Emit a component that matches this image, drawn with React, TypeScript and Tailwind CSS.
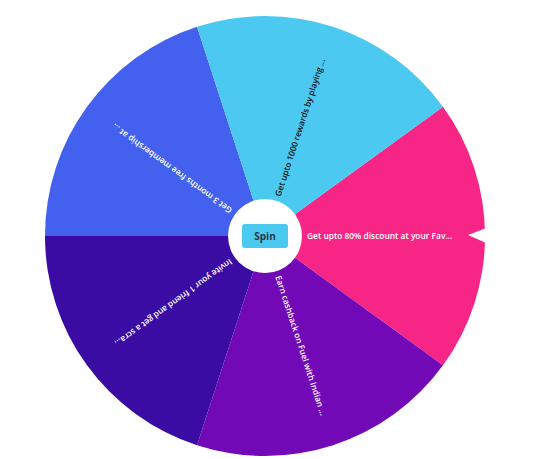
const SLICES = [
  { angle: 0, color: "#f72585", text: "Get upto 80% discount at your Fav...", fg: "#ffffff" },
  { angle: 72, color: "#7209b7", text: "Earn cashback on Fuel with Indian ...", fg: "#ffffff" },
  { angle: 144, color: "#3a0ca3", text: "Invite your 1 friend and get a scra...", fg: "#ffffff" },
  { angle: 216, color: "#4361ee", text: "Get 3 months free membership at ...", fg: "#ffffff" },
  { angle: 288, color: "#4cc9f0", text: "Get upto 1000 rewards by playing ...", fg: "#111111" },
];

const R = 220;
const C = 220;

function slicePath(center: number) {
  const a0 = ((center - 36) * Math.PI) / 180;
  const a1 = ((center + 36) * Math.PI) / 180;
  const x0 = C + R * Math.cos(a0);
  const y0 = C + R * Math.sin(a0);
  const x1 = C + R * Math.cos(a1);
  const y1 = C + R * Math.sin(a1);
  return `M${C},${C} L${x0},${y0} A${R},${R} 0 0 1 ${x1},${y1} Z`;
}

function Wheel() {
  return (
    <svg width={440} height={440} viewBox="0 0 440 440" className="block">
      {SLICES.map((s) => (
        <path key={s.angle} d={slicePath(s.angle)} fill={s.color} />
      ))}
      {SLICES.map((s) => (
        <text
          key={`t${s.angle}`}
          x={C + 42}
          y={C + 0.5}
          fill={s.fg}
          fontSize={8.4}
          fontWeight={600}
          dominantBaseline="middle"
          transform={`rotate(${s.angle} ${C} ${C})`}
          style={{ fontFamily: '"Open Sans", "Noto Sans", sans-serif' }}
        >
          {s.text}
        </text>
      ))}
      <polygon points="423,219 441,212 441,227" fill="#ffffff" />
    </svg>
  );
}

export default function App() {
  return (
    <div className="w-[544px] h-[459px] bg-white pl-[45px] pt-[16px] font-['Open_Sans',sans-serif]">
      <div className="relative w-[440px] h-[440px]">
        <Wheel />
        <div className="absolute left-[183px] top-[183px] w-[74px] h-[74px] rounded-full bg-white flex items-center justify-center">
          <button className="w-[46px] h-[24px] rounded-[3px] bg-[#4cc9f0] text-[10px] font-bold text-[#263447]">
            Spin
          </button>
        </div>
      </div>
    </div>
  );
}
